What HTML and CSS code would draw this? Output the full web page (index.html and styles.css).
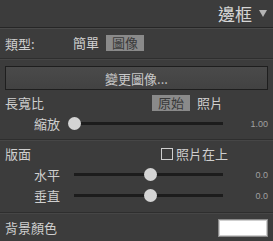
FILE: index.html
```html
<!DOCTYPE html>
<html lang="zh-Hant">
<head>
  <meta charset="UTF-8">
  <title>邊框</title>
  <link rel="stylesheet" href="styles.css">
</head>
<body>
  <div class="panel">
    <div class="header">
      <span class="title">邊框</span>
      <span class="caret"></span>
    </div>

    <div class="section">
      <div class="row type-row">
        <span class="label">類型:</span>
        <span class="opt">簡單</span>
        <span class="opt active">圖像</span>
      </div>
    </div>

    <div class="section s-image">
      <div class="btn">變更圖像...</div>
      <div class="row">
        <span class="label grow">長寬比</span>
        <span class="opt active">原始</span>
        <span class="opt">照片</span>
      </div>
      <div class="slider-row">
        <span class="sub">縮放</span>
        <div class="track"><span class="thumb" style="left: 0%"></span></div>
        <span class="val">1.00</span>
      </div>
    </div>

    <div class="section s-layout">
      <div class="row">
        <span class="label grow">版面</span>
        <span class="check"></span>
        <span class="check-label">照片在上</span>
      </div>
      <div class="slider-row">
        <span class="sub">水平</span>
        <div class="track"><span class="thumb" style="left: 51%"></span></div>
        <span class="val">0.0</span>
      </div>
      <div class="slider-row">
        <span class="sub">垂直</span>
        <div class="track"><span class="thumb" style="left: 51%"></span></div>
        <span class="val">0.0</span>
      </div>
    </div>

    <div class="section last">
      <div class="row">
        <span class="label grow">背景顏色</span>
        <span class="swatch"></span>
      </div>
    </div>
  </div>
</body>
</html>
```

FILE: styles.css
```css
body {
  margin: 0;
  background: #3c3c3c;
  font-family: "Noto Sans CJK TC", "Liberation Sans", sans-serif;
  color: #cfcfcf;
  font-size: 13px;
}

.panel {
  width: 273px;
  height: 241px;
  overflow: hidden;
}

.header {
  height: 27px;
  display: flex;
  align-items: center;
  justify-content: flex-end;
  padding-right: 6px;
  border-bottom: 1px solid #262626;
  box-shadow: 0 1px 0 #4a4a4a;
}

.title {
  font-size: 17px;
  line-height: 1;
  color: #d6d6d6;
}

.caret {
  width: 0;
  height: 0;
  margin-left: 7px;
  border-left: 4px solid transparent;
  border-right: 4px solid transparent;
  border-top: 7px solid #b4b4b4;
}

.section {
  border-bottom: 1px solid #2e2e2e;
  box-shadow: 0 1px 0 #464646;
  padding: 0 5px;
}

.s-image {
  padding-bottom: 5px;
}

.s-layout {
  padding-top: 3px;
  padding-bottom: 6px;
}

.section.last {
  padding-top: 4px;
  border-bottom: none;
  box-shadow: none;
}

.row {
  display: flex;
  align-items: center;
  height: 21px;
}

.type-row {
  height: 30px;
}

.type-row .label {
  width: 62px;
}

.label {
  line-height: 1;
}

.grow {
  flex: 1;
}

.opt {
  padding: 1px 6px;
  line-height: 14px;
  color: #d0d0d0;
}

.opt + .opt {
  margin-left: 1px;
}

.row .opt:last-child {
  margin-right: 39px;
}

.type-row .opt:last-child {
  margin-right: 0;
}

.opt.active {
  background: #8a8a8a;
  color: #3a3a3a;
}

.btn {
  margin: 7px 0 2px;
  height: 22px;
  border: 1px solid #1e1e1e;
  background: linear-gradient(#4a4a4a, #424242);
  display: flex;
  align-items: center;
  justify-content: center;
  color: #c8c8c8;
}

.slider-row {
  display: flex;
  align-items: center;
  height: 21px;
}

.sub {
  width: 69px;
  padding-left: 29px;
  box-sizing: border-box;
}

.track {
  position: relative;
  width: 149px;
  height: 3px;
  background: #1c1c1c;
}

.thumb {
  position: absolute;
  top: -5px;
  width: 13px;
  height: 13px;
  margin-left: -6px;
  border-radius: 50%;
  background: #d4d4d4;
}

.val {
  flex: 1;
  text-align: right;
  font-size: 9px;
  color: #a0a0a0;
  font-family: "Liberation Sans", sans-serif;
}

.check {
  width: 10px;
  height: 10px;
  border: 1px solid #cfcfcf;
  margin-right: 3px;
}

.check-label {
  margin-right: 40px;
}

.swatch {
  width: 48px;
  height: 16px;
  background: #fff;
  border: 1px solid #8a8a8a;
  box-shadow: inset 0 0 0 1px #cfcfcf;
}
```
